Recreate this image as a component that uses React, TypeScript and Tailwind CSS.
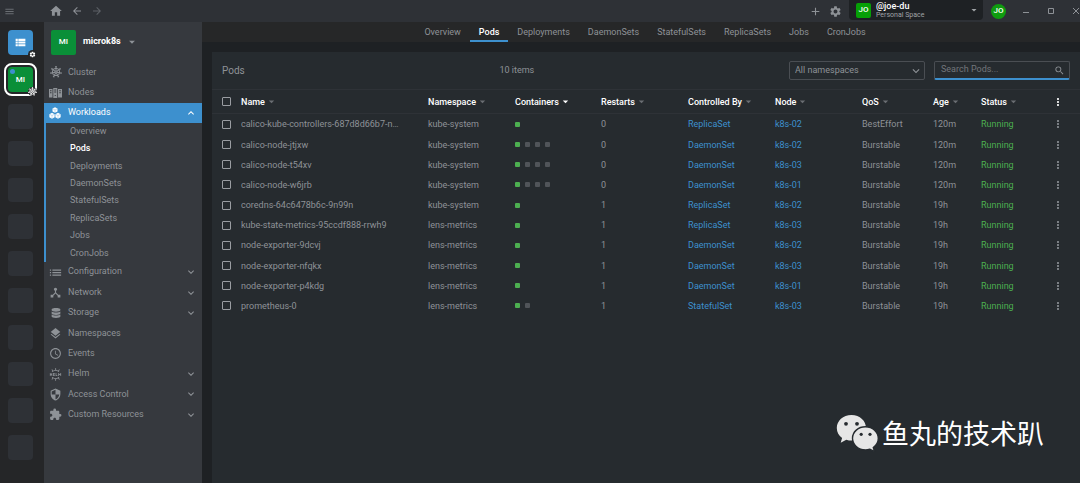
import type { ReactNode } from 'react'
import {
  MdAdd,
  MdArrowBack,
  MdArrowDropDown,
  MdArrowForward,
  MdDeviceHub,
  MdExtension,
  MdHome,
  MdKeyboardArrowDown,
  MdKeyboardArrowUp,
  MdLayers,
  MdList,
  MdMenu,
  MdMoreVert,
  MdSchedule,
  MdSearch,
  MdSecurity,
  MdSettings,
  MdViewList,
} from 'react-icons/md'
import { FaDatabase } from 'react-icons/fa'
import { SiHelm } from 'react-icons/si'

interface Pod {
  name: string
  namespace: string
  containers: number
  restarts: number
  owner: string
  node: string
  qos: string
  age: string
}

const PODS: Pod[] = [
  { name: 'calico-kube-controllers-687d8d66b7-n5x2k', namespace: 'kube-system', containers: 1, restarts: 0, owner: 'ReplicaSet', node: 'k8s-02', qos: 'BestEffort', age: '120m' },
  { name: 'calico-node-jtjxw', namespace: 'kube-system', containers: 4, restarts: 0, owner: 'DaemonSet', node: 'k8s-02', qos: 'Burstable', age: '120m' },
  { name: 'calico-node-t54xv', namespace: 'kube-system', containers: 4, restarts: 0, owner: 'DaemonSet', node: 'k8s-03', qos: 'Burstable', age: '120m' },
  { name: 'calico-node-w6jrb', namespace: 'kube-system', containers: 4, restarts: 0, owner: 'DaemonSet', node: 'k8s-01', qos: 'Burstable', age: '120m' },
  { name: 'coredns-64c6478b6c-9n99n', namespace: 'kube-system', containers: 1, restarts: 1, owner: 'ReplicaSet', node: 'k8s-02', qos: 'Burstable', age: '19h' },
  { name: 'kube-state-metrics-95ccdf888-rrwh9', namespace: 'lens-metrics', containers: 1, restarts: 1, owner: 'ReplicaSet', node: 'k8s-03', qos: 'Burstable', age: '19h' },
  { name: 'node-exporter-9dcvj', namespace: 'lens-metrics', containers: 1, restarts: 1, owner: 'DaemonSet', node: 'k8s-02', qos: 'Burstable', age: '19h' },
  { name: 'node-exporter-nfqkx', namespace: 'lens-metrics', containers: 1, restarts: 1, owner: 'DaemonSet', node: 'k8s-03', qos: 'Burstable', age: '19h' },
  { name: 'node-exporter-p4kdg', namespace: 'lens-metrics', containers: 1, restarts: 1, owner: 'DaemonSet', node: 'k8s-01', qos: 'Burstable', age: '19h' },
  { name: 'prometheus-0', namespace: 'lens-metrics', containers: 2, restarts: 1, owner: 'StatefulSet', node: 'k8s-03', qos: 'Burstable', age: '19h' },
]

const WORKLOADS = ['Overview', 'Pods', 'Deployments', 'DaemonSets', 'StatefulSets', 'ReplicaSets', 'Jobs', 'CronJobs']

const COLUMNS = [
  { label: 'Name', width: '' },
  { label: 'Namespace', width: 'w-[87px]' },
  { label: 'Containers', width: 'w-[86px]' },
  { label: 'Restarts', width: 'w-[87px]' },
  { label: 'Controlled By', width: 'w-[87px]' },
  { label: 'Node', width: 'w-[87px]' },
  { label: 'QoS', width: 'w-[71px]' },
  { label: 'Age', width: 'w-12' },
  { label: 'Status', width: 'w-[54px]' },
]

function WheelIcon({ className }: { className: string }) {
  const spokes = [0, 51.4, 102.9, 154.3, 205.7, 257.1, 308.6]
  return (
    <svg viewBox="0 0 24 24" className={className} fill="none" stroke="currentColor" strokeWidth="2">
      <circle cx="12" cy="12" r="7.4" />
      <circle cx="12" cy="12" r="2" />
      {spokes.map((angle) => (
        <path key={angle} d="M12 10V1M10.4 1.4h3.2" transform={`rotate(${angle} 12 12)`} />
      ))}
    </svg>
  )
}

function NodesIcon() {
  return (
    <svg viewBox="0 0 26 20" className="h-[10px] w-[13px]" fill="currentColor">
      <path fillRule="evenodd" d="M0 2h7v17H0zM2 4.5h3v2H2zM2 8.5h3v2H2z" />
      <path fillRule="evenodd" d="M8.5 0h8v20h-8zM10.5 3h4v2h-4zM10.5 7h4v2h-4zM11.5 14h2v2h-2z" />
      <path fillRule="evenodd" d="M18 2h8v17h-8zM20.5 4.5h3v2h-3zM20.5 8.5h3v2h-3z" />
    </svg>
  )
}

function WorkloadsIcon() {
  return (
    <svg viewBox="0 0 24 24" className="size-3" fill="currentColor">
      <path d="M12 .5l5 2.6v5.8L12 11.5 7 8.9V3.1z" />
      <path d="M6 11.5l5.3 2.8v6L6 23.3.7 20.3v-6z" />
      <path d="M18 11.5l5.3 2.8v6L18 23.3l-5.3-3v-6z" />
      <path
        d="M7.5 3.5L12 6l4.5-2.5M12 6v5M1.5 14.7L6 17l4.5-2.3M6 17v5.5M13.5 14.7L18 17l4.5-2.3M18 17v5.5"
        fill="none"
        stroke="#3d90ce"
        strokeWidth=".6"
      />
    </svg>
  )
}

function WechatLogo() {
  return (
    <svg viewBox="0 0 44 38" className="h-[38px] w-11">
      <path
        fill="#e6e6e6"
        d="M15.5 1C7 1 .8 6.7.8 14c0 4.2 2 7.600 5.300 10L4.700 28.700l5.600-2.900c1.800.6 3.400.8 5.200.8C24 26.600 30 21 30 14S24 1 15.500 1z"
      />
      <path
        fill="#e6e6e6"
        stroke="#262b2f"
        strokeWidth="1.4"
        d="M29.500 12.800c-7.300 0-13 5-13 11.500s5.700 11.600 13 11.600c1.500 0 3-.3 4.400-.7l4.700 2.500-1.300-4.200c3.200-2.300 5-5.400 5-9.200 0-6.500-5.700-11.500-12.800-11.500z"
      />
      <g fill="#262b2f">
        <circle cx="10" cy="9.8" r="1.9" />
        <circle cx="21" cy="9.8" r="1.9" />
        <circle cx="25.2" cy="20.3" r="1.6" />
        <circle cx="34" cy="20.3" r="1.6" />
      </g>
    </svg>
  )
}

function WindowIcon({ d }: { d: string }) {
  return (
    <svg viewBox="0 0 8 8" className="size-2" fill="none" stroke="currentColor" strokeWidth="1">
      <path d={d} />
    </svg>
  )
}

function TitleBar() {
  return (
    <header className="flex h-[22px] items-center bg-[#2e3136] text-[#8e9297]">
      <button aria-label="Menu" className="ml-1 text-[#6a6e73]">
        <MdMenu className="size-[11px]" />
      </button>
      <div className="ml-[34px] flex items-center gap-2">
        <button aria-label="Home">
          <MdHome className="size-[14px]" />
        </button>
        <button aria-label="Back">
          <MdArrowBack className="size-3" />
        </button>
        <button aria-label="Forward" className="text-[#5d6166]">
          <MdArrowForward className="size-3" />
        </button>
      </div>
      <div className="ml-auto flex h-full items-center">
        <button aria-label="Add">
          <MdAdd className="size-[13px]" />
        </button>
        <button aria-label="Settings" className="ml-[7px]">
          <MdSettings className="size-[13px]" />
        </button>
        <button className="mb-[2px] ml-[7px] flex h-5 w-[134px] items-center rounded-b-sm bg-[#1e2124] pr-[3px] pl-[7px] text-left">
          <span className="flex size-[15px] items-center justify-center rounded-xs bg-[#06a006] text-[8px] font-medium text-white">JO</span>
          <span className="ml-[5px] flex-1 pt-[2px]">
            <span className="block text-[9px] leading-[9px] font-medium text-white">@joe-du</span>
            <span className="block text-[7px] leading-[9px] text-[#a0a3a7]">Personal Space</span>
          </span>
          <MdArrowDropDown className="size-3 text-[#a0a3a7]" />
        </button>
        <button className="ml-2 flex size-[15px] items-center justify-center rounded-full bg-[#0f9c0f] text-[8px] font-medium text-white">JO</button>
        <button aria-label="Minimize" className="ml-4">
          <WindowIcon d="M1 5.5h6" />
        </button>
        <button aria-label="Maximize" className="ml-[17px]">
          <WindowIcon d="M1.500 1.500h5v5h-5z" />
        </button>
        <button aria-label="Close" className="ml-[17px]">
          <WindowIcon d="M1 1l6 6M7 1L1 7" />
        </button>
      </div>
    </header>
  )
}

function HotbarRail() {
  return (
    <aside className="flex w-11 shrink-0 flex-col items-center gap-3 bg-[#252628] pt-2 pr-[3px]">
      <button aria-label="Catalog" className="relative flex size-[25px] items-center justify-center rounded bg-[#3d90ce] text-white">
        <MdViewList className="size-[13px]" />
        <span className="absolute -right-1 -bottom-1 rounded-full bg-[#252628] p-px">
          <MdSettings className="size-[7px]" />
        </span>
      </button>
      <button className="relative flex size-[25px] items-center justify-center rounded bg-[#0a8f38] text-[8px] font-medium text-white outline-2 outline-offset-2 outline-white">
        MI
        <span className="absolute top-[2px] left-[2px] size-[5px] rounded-full bg-[#3d90ce]" />
        <span className="absolute -right-1 -bottom-1 rounded-full bg-[#252628] text-white">
          <WheelIcon className="size-[9px]" />
        </span>
      </button>
      <ul className="grid h-[356px] auto-rows-fr gap-3">
        {Array.from({ length: 10 }, (_, i) => (
          <li key={i} className="w-[25px] rounded bg-[#2e3136]" />
        ))}
      </ul>
    </aside>
  )
}

interface NavItemProps {
  icon: ReactNode
  label: string
  expandable?: boolean
}

function NavItem({ icon, label, expandable }: NavItemProps) {
  return (
    <li>
      <a href="#" className="flex h-full items-center pr-[5px] pl-[5px]">
        <span className="flex w-[13px] justify-center">{icon}</span>
        <span className="ml-[6px] flex-1">{label}</span>
        {expandable && <MdKeyboardArrowDown className="size-3" />}
      </a>
    </li>
  )
}

function Sidebar() {
  return (
    <nav className="w-[158px] shrink-0 bg-[#36393e] text-[9px] text-[#8e9297]">
      <button className="flex h-10 w-full items-center pl-[7px]">
        <span className="flex size-[25px] items-center justify-center rounded-xs bg-[#0a8f38] text-[8px] font-medium text-white">MI</span>
        <span className="ml-[7px] font-bold text-white">microk8s</span>
        <MdArrowDropDown className="ml-1 size-[14px]" />
      </button>
      <ul className="grid h-[41px] auto-rows-fr">
        <NavItem icon={<WheelIcon className="size-3" />} label="Cluster" />
        <NavItem icon={<NodesIcon />} label="Nodes" />
      </ul>
      <a href="#" className="flex h-5 items-center bg-[#3d90ce] pr-[5px] pl-[5px] text-white">
        <WorkloadsIcon />
        <span className="ml-[7px] flex-1">Workloads</span>
        <MdKeyboardArrowUp className="size-3" />
      </a>
      <ul className="grid h-[139px] auto-rows-fr border-l-2 border-[#3d90ce]">
        {WORKLOADS.map((item) => (
          <li key={item}>
            <a href="#" className={item === 'Pods' ? 'flex h-full items-center pl-6 font-medium text-white' : 'flex h-full items-center pl-6'}>
              {item}
            </a>
          </li>
        ))}
      </ul>
      <ul className="grid h-[163px] auto-rows-fr">
        <NavItem icon={<MdList className="size-[15px] shrink-0" />} label="Configuration" expandable />
        <NavItem icon={<MdDeviceHub className="size-[13px]" />} label="Network" expandable />
        <NavItem icon={<FaDatabase className="size-[10px]" />} label="Storage" expandable />
        <NavItem icon={<MdLayers className="size-[13px]" />} label="Namespaces" />
        <NavItem icon={<MdSchedule className="size-[13px]" />} label="Events" />
        <NavItem icon={<SiHelm className="size-[13px]" />} label="Helm" expandable />
        <NavItem icon={<MdSecurity className="size-[13px]" />} label="Access Control" expandable />
        <NavItem icon={<MdExtension className="size-[13px]" />} label="Custom Resources" expandable />
      </ul>
    </nav>
  )
}

function Tabs() {
  return (
    <div className="flex h-5 justify-center bg-[#262728] pl-2 text-[9px] text-[#8e9297]">
      {WORKLOADS.map((tab) => (
        <a
          key={tab}
          href="#"
          className={
            tab === 'Pods'
              ? 'flex items-center border-b-2 border-[#3d90ce] px-[9px] pt-[3px] font-medium text-white'
              : 'flex items-center px-[9px] pt-px'
          }
        >
          {tab}
        </a>
      ))}
    </div>
  )
}

function Checkbox({ label }: { label: string }) {
  return (
    <input
      type="checkbox"
      aria-label={label}
      className="ml-[10px] block size-[9px] appearance-none rounded-[1px] border border-[#9a9da2]"
    />
  )
}

function Containers({ count }: { count: number }) {
  return (
    <div className="flex gap-[5px]">
      {Array.from({ length: count }, (_, i) => (
        <span key={i} className={i === 0 ? 'size-[5px] rounded-[1px] bg-[#4caf50]' : 'size-[5px] rounded-[1px] bg-[#505459]'} />
      ))}
    </div>
  )
}

function PodsTable() {
  return (
    <table className="h-[227px] w-full table-fixed text-left text-[9px] leading-3">
      <thead>
        <tr className="h-6 border-y border-[#2e3237] text-white">
          <th className="w-[29px]">
            <Checkbox label="Select all" />
          </th>
          {COLUMNS.map(({ label, width }) => (
            <th key={label} className={width}>
              <button className="flex items-center font-medium whitespace-nowrap">
                {label}
                <MdArrowDropDown className={label === 'Containers' ? 'size-[13px]' : 'size-[13px] text-[#6a6e73]'} />
              </button>
            </th>
          ))}
          <th className="w-[45px]">
            <button aria-label="Columns" className="mx-auto block">
              <MdMoreVert className="size-3" />
            </button>
          </th>
        </tr>
      </thead>
      <tbody className="text-[#8e9297]">
        {PODS.map((pod) => (
          <tr key={pod.name}>
            <td>
              <Checkbox label={pod.name} />
            </td>
            <td className="truncate pr-7">{pod.name}</td>
            <td>{pod.namespace}</td>
            <td>
              <Containers count={pod.containers} />
            </td>
            <td>{pod.restarts}</td>
            <td>
              <a href="#" className="text-[#3d90ce]">{pod.owner}</a>
            </td>
            <td>
              <a href="#" className="text-[#3d90ce]">{pod.node}</a>
            </td>
            <td>{pod.qos}</td>
            <td>{pod.age}</td>
            <td className="text-[#4caf50]">Running</td>
            <td>
              <button aria-label="Pod menu" className="mx-auto block">
                <MdMoreVert className="size-3" />
              </button>
            </td>
          </tr>
        ))}
      </tbody>
    </table>
  )
}

export default function App() {
  return (
    <div className="relative flex min-h-screen flex-col bg-[#1e2124] font-['Roboto','Noto_Sans_CJK_SC',sans-serif]">
      <TitleBar />
      <div className="flex flex-1">
        <HotbarRail />
        <Sidebar />
        <main className="flex min-w-0 flex-1 flex-col">
          <Tabs />
          <section className="mt-[10px] ml-[10px] flex-1 bg-[#262b2f]">
            <div className="flex h-[37px] items-center pr-[10px] pl-[10px] text-[9px] text-[#8e9297]">
              <h1 className="text-[10px]">Pods</h1>
              <span className="flex-1 text-center">10 items</span>
              <div className="relative">
                <select aria-label="Namespace" className="h-[19px] w-[136px] appearance-none rounded-xs border border-[#4a4e53] pl-[5px]">
                  <option>All namespaces</option>
                </select>
                <MdKeyboardArrowDown className="pointer-events-none absolute top-[3px] right-[2px] size-[14px]" />
              </div>
              <div className="ml-[9px] flex h-[19px] w-[136px] items-center rounded-xs border border-b-2 border-[#4a4e53] border-b-[#3d90ce] pr-1 pl-[6px]">
                <input aria-label="Search Pods" placeholder="Search Pods..." className="min-w-0 flex-1 outline-none placeholder:text-[#72767b]" />
                <MdSearch className="size-[11px]" />
              </div>
            </div>
            <PodsTable />
          </section>
        </main>
      </div>
      <div className="absolute right-9 bottom-7 flex items-center gap-[2px] text-[27px] text-white">
        <WechatLogo />
        <span className="pt-1">鱼丸的技术趴</span>
      </div>
    </div>
  )
}
